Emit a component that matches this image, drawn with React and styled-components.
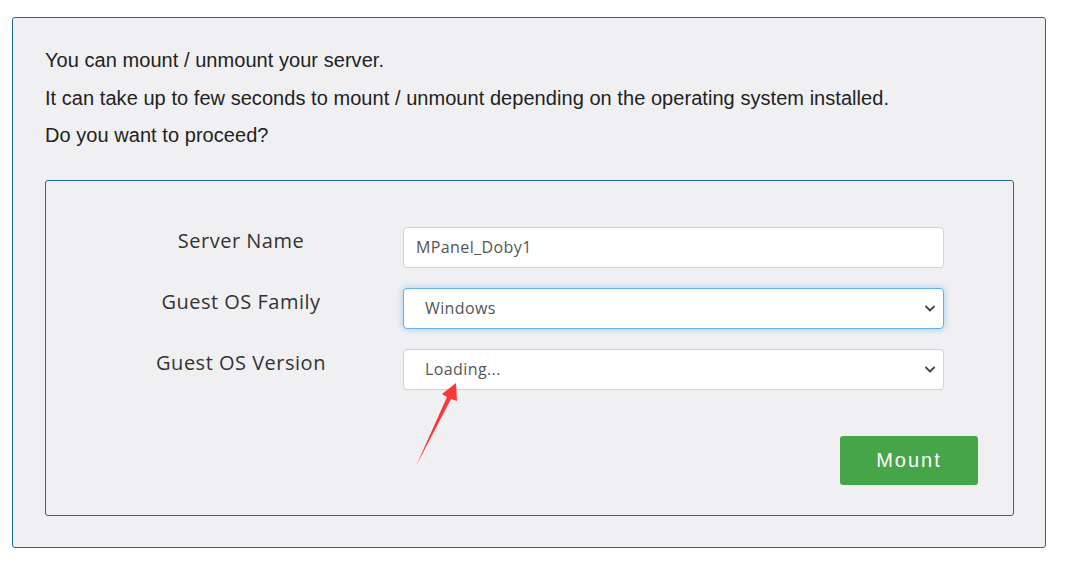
import React from 'react';
import styled, { createGlobalStyle } from 'styled-components';

const GlobalStyle = createGlobalStyle`
    body {
        margin: 0;
        background: #ffffff;
        font-family: "Liberation Sans", Arial, sans-serif;
    }
`;

const Page = styled.div`
    position: relative;
    width: 1073px;
    height: 566px;
    padding: 17px 0 0 12px;
    box-sizing: border-box;
`;

const Panel = styled.div`
    width: 1034px;
    box-sizing: border-box;
    background: #f0f0f2;
    border: 1px solid #1d6b8a;
    border-radius: 3px;
    padding: 24px 31px 31px 32px;
`;

const Intro = styled.p`
    margin: 0;
    font-size: 20px;
    line-height: 37.5px;
    letter-spacing: 0.05px;
    color: #222;
`;

const FormBox = styled.div`
    margin-top: 25px;
    border: 1px solid #1d6b8a;
    border-radius: 3px;
    padding: 46px 35px 30px 95px;
`;

const Grid = styled.div`
    display: grid;
    grid-template-columns: 200px 541px;
    column-gap: 62px;
    row-gap: 20px;
`;

const Label = styled.label`
    font-family: "Open Sans", "Noto Sans", sans-serif;
    font-size: 20px;
    line-height: 26px;
    padding-top: 1px;
    text-align: center;
    color: #333;
    letter-spacing: 0.5px;
    white-space: nowrap;
`;

const Field = styled.div`
    height: 41px;
    box-sizing: border-box;
    background: #fff;
    border: 1px solid ${(p) => (p.focused ? '#66afe9' : '#d2d2d4')};
    border-radius: 4px;
    box-shadow: ${(p) =>
        p.focused ? '0 0 7px rgba(102, 175, 233, 0.6)' : 'none'};
    display: flex;
    align-items: center;
    padding: 0 ${(p) => (p.select ? '8px 0 21px' : '12px')};
    font-family: "Open Sans", "Noto Sans", sans-serif;
    font-size: 16px;
    letter-spacing: 0.4px;
    color: #555;
`;

const FieldText = styled.span`
    flex: 1;
`;

const Chevron = () => (
    <svg width="10" height="7" viewBox="0 0 10 7">
        <path
            d="M1 1.5 L5 5.5 L9 1.5"
            fill="none"
            stroke="#444"
            strokeWidth="1.8"
            strokeLinecap="round"
            strokeLinejoin="round"
        />
    </svg>
);

const ButtonRow = styled.div`
    display: flex;
    justify-content: flex-end;
    margin-top: 46px;
`;

const MountButton = styled.button`
    width: 138px;
    height: 49px;
    background: #46a548;
    border: none;
    border-radius: 3px;
    color: #fff;
    font-family: "Liberation Sans", Arial, sans-serif;
    font-size: 20px;
    letter-spacing: 2px;
    cursor: pointer;
`;

const Arrow = styled.svg`
    position: absolute;
    left: 0;
    top: 0;
    pointer-events: none;
`;

const App = () => {
    return (
        <Page>
            <GlobalStyle />
            <Panel>
                <Intro>You can mount / unmount your server.</Intro>
                <Intro>
                    It can take up to few seconds to mount / unmount depending on the
                    operating system installed.
                </Intro>
                <Intro>Do you want to proceed?</Intro>
                <FormBox>
                    <Grid>
                        <Label>Server Name</Label>
                        <Field>
                            <FieldText>MPanel_Doby1</FieldText>
                        </Field>
                        <Label>Guest OS Family</Label>
                        <Field select focused>
                            <FieldText>Windows</FieldText>
                            <Chevron />
                        </Field>
                        <Label>Guest OS Version</Label>
                        <Field select>
                            <FieldText>Loading...</FieldText>
                            <Chevron />
                        </Field>
                    </Grid>
                    <ButtonRow>
                        <MountButton>Mount</MountButton>
                    </ButtonRow>
                </FormBox>
            </Panel>
            <Arrow width="1073" height="566">
                <polygon
                    points="416,466 447,397 442,394 456,383 457,401 451,399"
                    fill="#f93838"
                />
            </Arrow>
        </Page>
    );
};

export default App;
